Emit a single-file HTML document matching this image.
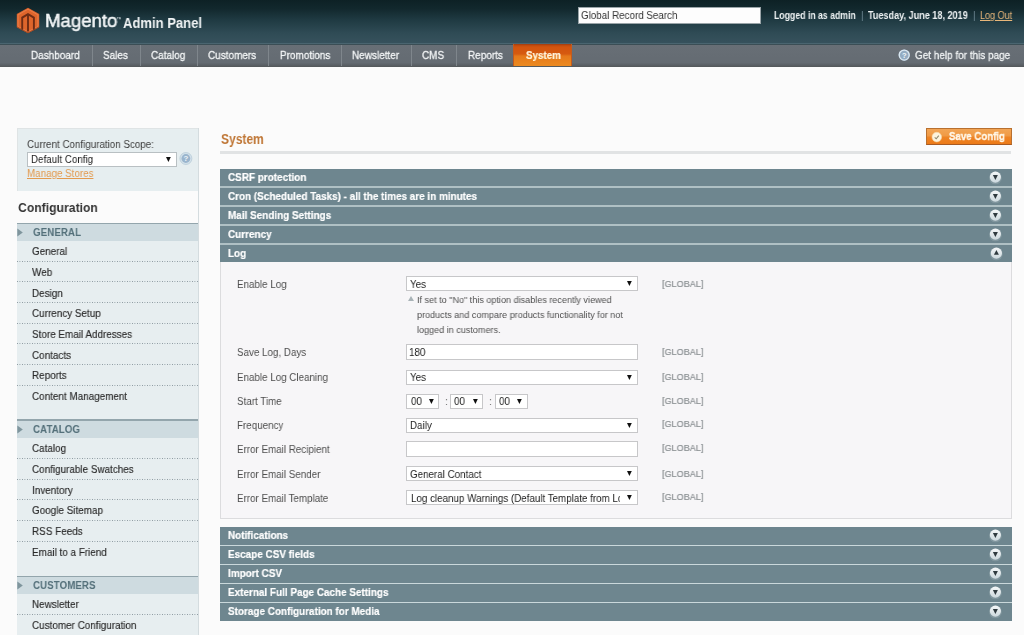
<!DOCTYPE html>
<html><head><meta charset="utf-8">
<style>
*{margin:0;padding:0;box-sizing:border-box}
html,body{width:1024px;height:635px;overflow:hidden;background:#fbfbfb;font-family:"Liberation Sans",sans-serif}
.r{position:absolute}
.t{position:absolute;white-space:nowrap;line-height:1;transform-origin:0 0;will-change:transform}
</style></head><body>
<div class="r" style="left:0px;top:0px;width:1024px;height:44px;background:linear-gradient(#0d2125 0%,#12282d 20%,#1f3a42 45%,#2f4b55 75%,#37525d 100%)"></div>
<div class="r" style="left:0px;top:42.5px;width:1024px;height:1px;background:#4a6570"></div>
<div class="r" style="left:0px;top:43.5px;width:1024px;height:1.5px;background:#3b4e55"></div>
<svg class="r" style="left:16px;top:7px" width="24" height="27" viewBox="16 7 24 27">
<polygon points="28,7.8 39.2,14 39.2,27.2 28,33.2 16.8,27.2 16.8,14" fill="#de652b"/>
<polygon points="28,9.2 37.9,14.8 37.9,26.5 28,31.8 18.1,26.5 18.1,14.8" fill="none" stroke="#ef8a5c" stroke-width="0.9" opacity="0.7"/>
<polyline points="22.2,30.2 22.2,17.6 28,14.2 33.9,17.6 33.9,30.2" fill="none" stroke="#6e2c14" stroke-width="1.9"/>
<line x1="28" y1="15" x2="28" y2="31.5" stroke="#6e2c14" stroke-width="1.9"/>
<polyline points="17.2,27 28,32.8 38.8,27" fill="none" stroke="#9a4420" stroke-width="0.9" opacity="0.8"/>
</svg>
<div class="t" style="left:45.20px;top:11.32px;font-size:19px;color:#f2f5f6;font-weight:normal;transform:scaleX(0.98);-webkit-text-stroke:0.5px #f2f5f6">Magento</div>
<div class="t" style="left:116.20px;top:16.32px;font-size:6px;color:#dfe6e8;font-weight:normal;transform:scaleX(0.9);">&#8482;</div>
<div class="t" style="left:123.30px;top:15.93px;font-size:14.5px;color:#f2f5f6;font-weight:bold;transform:scaleX(0.9);">Admin Panel</div>
<div class="r" style="left:578px;top:7px;width:183px;height:17px;background:#fdfdfd;border:1px solid #9aa4a8"></div>
<div class="t" style="left:580.70px;top:9.78px;font-size:11.25px;color:#333;font-weight:normal;transform:scaleX(0.871);">Global Record Search</div>
<div class="t" style="left:773.60px;top:11.34px;font-size:10px;color:#eef2f3;font-weight:bold;transform:scaleX(0.871);">Logged in as admin</div>
<div class="t" style="left:860.80px;top:11.34px;font-size:10px;color:#6d8690;font-weight:normal;transform:scaleX(0.871);">|</div>
<div class="t" style="left:868.10px;top:10.95px;font-size:10.45px;color:#eef2f3;font-weight:bold;transform:scaleX(0.871);">Tuesday, June 18, 2019</div>
<div class="t" style="left:972.80px;top:11.34px;font-size:10px;color:#6d8690;font-weight:normal;transform:scaleX(0.871);">|</div>
<div class="t" style="left:979.80px;top:11.00px;font-size:10.4px;color:#e9b77a;font-weight:normal;transform:scaleX(0.871);text-decoration:underline">Log Out</div>
<div class="r" style="left:0px;top:45px;width:1024px;height:21.5px;background:linear-gradient(#686f76 0%,#646b72 80%,#5d6369 88%,#53575a 100%)"></div>
<div class="r" style="left:91.5px;top:45px;width:1px;height:21px;background:#7f868c"></div>
<div class="r" style="left:139.5px;top:45px;width:1px;height:21px;background:#7f868c"></div>
<div class="r" style="left:196.5px;top:45px;width:1px;height:21px;background:#7f868c"></div>
<div class="r" style="left:267.5px;top:45px;width:1px;height:21px;background:#7f868c"></div>
<div class="r" style="left:340.5px;top:45px;width:1px;height:21px;background:#7f868c"></div>
<div class="r" style="left:410.5px;top:45px;width:1px;height:21px;background:#7f868c"></div>
<div class="r" style="left:455.5px;top:45px;width:1px;height:21px;background:#7f868c"></div>
<div class="t" style="left:31.40px;top:50.38px;font-size:11.25px;color:#f4f6f7;font-weight:normal;transform:scaleX(0.885);-webkit-text-stroke:0.3px #f4f6f7">Dashboard</div>
<div class="t" style="left:103.00px;top:50.38px;font-size:11.25px;color:#f4f6f7;font-weight:normal;transform:scaleX(0.885);-webkit-text-stroke:0.3px #f4f6f7">Sales</div>
<div class="t" style="left:150.90px;top:50.38px;font-size:11.25px;color:#f4f6f7;font-weight:normal;transform:scaleX(0.885);-webkit-text-stroke:0.3px #f4f6f7">Catalog</div>
<div class="t" style="left:208.00px;top:50.38px;font-size:11.25px;color:#f4f6f7;font-weight:normal;transform:scaleX(0.885);-webkit-text-stroke:0.3px #f4f6f7">Customers</div>
<div class="t" style="left:279.50px;top:50.38px;font-size:11.25px;color:#f4f6f7;font-weight:normal;transform:scaleX(0.885);-webkit-text-stroke:0.3px #f4f6f7">Promotions</div>
<div class="t" style="left:352.00px;top:50.38px;font-size:11.25px;color:#f4f6f7;font-weight:normal;transform:scaleX(0.885);-webkit-text-stroke:0.3px #f4f6f7">Newsletter</div>
<div class="t" style="left:422.00px;top:50.38px;font-size:11.25px;color:#f4f6f7;font-weight:normal;transform:scaleX(0.885);-webkit-text-stroke:0.3px #f4f6f7">CMS</div>
<div class="t" style="left:467.50px;top:50.38px;font-size:11.25px;color:#f4f6f7;font-weight:normal;transform:scaleX(0.885);-webkit-text-stroke:0.3px #f4f6f7">Reports</div>
<div class="r" style="left:513px;top:44px;width:59px;height:22px;background:linear-gradient(#9c3c10 0,#c04b0e 1.5px,#d2540e 3px,#d65a10 45%,#e5791a 55%,#ec8a20 100%);border-left:1px solid #c45a1c;border-right:1px solid #c45a1c"></div>
<div class="t" style="left:525.60px;top:50.38px;font-size:11.25px;color:#fff5de;font-weight:bold;transform:scaleX(0.871);-webkit-text-stroke:0.2px #fff5de">System</div>
<svg class="r" style="left:897px;top:47.5px" width="14" height="14" viewBox="0 0 14 14">
<circle cx="7.2" cy="7.1" r="5.6" fill="#93acc2"/>
<circle cx="7.2" cy="7.1" r="5" fill="none" stroke="#dbe8f1" stroke-width="1.3"/>
<text x="7.2" y="9.8" font-family="Liberation Sans" font-weight="bold" font-size="7.5" text-anchor="middle" fill="#f2f7fa">?</text>
</svg>
<div class="t" style="left:914.80px;top:50.18px;font-size:11.25px;color:#f0f3f4;font-weight:normal;transform:scaleX(0.885);-webkit-text-stroke:0.3px #f0f3f4">Get help for this page</div>
<div class="r" style="left:17px;top:128px;width:182px;height:63px;background:#e6eef0;border:1px solid #dfe4e5;border-bottom:none"></div>
<div class="t" style="left:27.00px;top:138.78px;font-size:11.25px;color:#3c3c3c;font-weight:normal;transform:scaleX(0.871);">Current Configuration Scope:</div>
<div class="r" style="left:26.5px;top:152px;width:150px;height:15px;background:#fff;border:1px solid #b9c0c3"></div>
<div class="t" style="left:30.80px;top:153.88px;font-size:11.25px;color:#222;font-weight:normal;transform:scaleX(0.871);">Default Config</div>
<svg class="r" style="left:165px;top:156.2px" width="6.8" height="6.9" viewBox="165 156.2 6.8 6.9"><polygon points="166,157.2 170.8,157.2 168.4,162.1" fill="#111"/></svg>
<svg class="r" style="left:179px;top:152px" width="14" height="14" viewBox="0 0 14 14">
<circle cx="6.9" cy="6.5" r="6" fill="#d3e1ea" stroke="#b3c8d6" stroke-width="0.7"/>
<circle cx="6.9" cy="6.5" r="4.4" fill="#9ab5cd"/>
<text x="6.9" y="9.3" font-family="Liberation Sans" font-weight="bold" font-size="7.8" text-anchor="middle" fill="#eef4f8">?</text>
</svg>
<div class="t" style="left:27.00px;top:168.18px;font-size:11.25px;color:#e39a4e;font-weight:normal;transform:scaleX(0.871);text-decoration:underline">Manage Stores</div>
<div class="r" style="left:198px;top:128px;width:1px;height:507px;background:#d4dcdf"></div>
<div class="t" style="left:18.00px;top:201.40px;font-size:13.7px;color:#333;font-weight:bold;transform:scaleX(0.89);">Configuration</div>
<div class="r" style="left:17px;top:222.8px;width:181px;height:196.2px;background:#e7eef0"></div>
<div class="r" style="left:17px;top:222.8px;width:181px;height:1.5px;background:#93a5ac"></div>
<div class="r" style="left:17px;top:224.3px;width:181px;height:17.2px;background:#cedbe0"></div>
<svg class="r" style="left:17px;top:228.3px" width="7" height="9" viewBox="0 0 7 9"><polygon points="0.3,0.5 5.8,4.5 0.3,8.5" fill="#7f959d"/></svg>
<div class="t" style="left:32.50px;top:227.48px;font-size:11.25px;color:#54707a;font-weight:bold;transform:scaleX(0.871);">GENERAL</div>
<div class="t" style="left:32.20px;top:246.48px;font-size:11.25px;color:#2a2a2a;font-weight:normal;transform:scaleX(0.879);-webkit-text-stroke:0.15px #2a2a2a">General</div>
<div class="t" style="left:32.20px;top:267.12px;font-size:11.25px;color:#2a2a2a;font-weight:normal;transform:scaleX(0.879);-webkit-text-stroke:0.15px #2a2a2a">Web</div>
<div class="t" style="left:32.20px;top:287.76px;font-size:11.25px;color:#2a2a2a;font-weight:normal;transform:scaleX(0.879);-webkit-text-stroke:0.15px #2a2a2a">Design</div>
<div class="t" style="left:32.20px;top:308.40px;font-size:11.25px;color:#2a2a2a;font-weight:normal;transform:scaleX(0.879);-webkit-text-stroke:0.15px #2a2a2a">Currency Setup</div>
<div class="t" style="left:32.20px;top:329.04px;font-size:11.25px;color:#2a2a2a;font-weight:normal;transform:scaleX(0.879);-webkit-text-stroke:0.15px #2a2a2a">Store Email Addresses</div>
<div class="t" style="left:32.20px;top:349.68px;font-size:11.25px;color:#2a2a2a;font-weight:normal;transform:scaleX(0.879);-webkit-text-stroke:0.15px #2a2a2a">Contacts</div>
<div class="t" style="left:32.20px;top:370.32px;font-size:11.25px;color:#2a2a2a;font-weight:normal;transform:scaleX(0.879);-webkit-text-stroke:0.15px #2a2a2a">Reports</div>
<div class="t" style="left:32.20px;top:390.96px;font-size:11.25px;color:#2a2a2a;font-weight:normal;transform:scaleX(0.879);-webkit-text-stroke:0.15px #2a2a2a">Content Management</div>
<div class="r" style="left:17px;top:261px;width:181px;height:1px;background-image:linear-gradient(to right,#86939a 40%,transparent 40%);background-size:2.5px 1px"></div>
<div class="r" style="left:17px;top:281px;width:181px;height:1px;background-image:linear-gradient(to right,#86939a 40%,transparent 40%);background-size:2.5px 1px"></div>
<div class="r" style="left:17px;top:302px;width:181px;height:1px;background-image:linear-gradient(to right,#86939a 40%,transparent 40%);background-size:2.5px 1px"></div>
<div class="r" style="left:17px;top:323px;width:181px;height:1px;background-image:linear-gradient(to right,#86939a 40%,transparent 40%);background-size:2.5px 1px"></div>
<div class="r" style="left:17px;top:343px;width:181px;height:1px;background-image:linear-gradient(to right,#86939a 40%,transparent 40%);background-size:2.5px 1px"></div>
<div class="r" style="left:17px;top:364px;width:181px;height:1px;background-image:linear-gradient(to right,#86939a 40%,transparent 40%);background-size:2.5px 1px"></div>
<div class="r" style="left:17px;top:385px;width:181px;height:1px;background-image:linear-gradient(to right,#86939a 40%,transparent 40%);background-size:2.5px 1px"></div>
<div class="r" style="left:17px;top:419px;width:181px;height:156.5px;background:#e7eef0"></div>
<div class="r" style="left:17px;top:419px;width:181px;height:1.5px;background:#93a5ac"></div>
<div class="r" style="left:17px;top:420.5px;width:181px;height:17.2px;background:#cedbe0"></div>
<svg class="r" style="left:17px;top:424.5px" width="7" height="9" viewBox="0 0 7 9"><polygon points="0.3,0.5 5.8,4.5 0.3,8.5" fill="#7f959d"/></svg>
<div class="t" style="left:32.50px;top:424.38px;font-size:11.25px;color:#54707a;font-weight:bold;transform:scaleX(0.871);">CATALOG</div>
<div class="t" style="left:32.20px;top:443.38px;font-size:11.25px;color:#2a2a2a;font-weight:normal;transform:scaleX(0.879);-webkit-text-stroke:0.15px #2a2a2a">Catalog</div>
<div class="t" style="left:32.20px;top:464.02px;font-size:11.25px;color:#2a2a2a;font-weight:normal;transform:scaleX(0.879);-webkit-text-stroke:0.15px #2a2a2a">Configurable Swatches</div>
<div class="t" style="left:32.20px;top:484.66px;font-size:11.25px;color:#2a2a2a;font-weight:normal;transform:scaleX(0.879);-webkit-text-stroke:0.15px #2a2a2a">Inventory</div>
<div class="t" style="left:32.20px;top:505.30px;font-size:11.25px;color:#2a2a2a;font-weight:normal;transform:scaleX(0.879);-webkit-text-stroke:0.15px #2a2a2a">Google Sitemap</div>
<div class="t" style="left:32.20px;top:525.94px;font-size:11.25px;color:#2a2a2a;font-weight:normal;transform:scaleX(0.879);-webkit-text-stroke:0.15px #2a2a2a">RSS Feeds</div>
<div class="t" style="left:32.20px;top:546.58px;font-size:11.25px;color:#2a2a2a;font-weight:normal;transform:scaleX(0.879);-webkit-text-stroke:0.15px #2a2a2a">Email to a Friend</div>
<div class="r" style="left:17px;top:458px;width:181px;height:1px;background-image:linear-gradient(to right,#86939a 40%,transparent 40%);background-size:2.5px 1px"></div>
<div class="r" style="left:17px;top:479px;width:181px;height:1px;background-image:linear-gradient(to right,#86939a 40%,transparent 40%);background-size:2.5px 1px"></div>
<div class="r" style="left:17px;top:499px;width:181px;height:1px;background-image:linear-gradient(to right,#86939a 40%,transparent 40%);background-size:2.5px 1px"></div>
<div class="r" style="left:17px;top:520px;width:181px;height:1px;background-image:linear-gradient(to right,#86939a 40%,transparent 40%);background-size:2.5px 1px"></div>
<div class="r" style="left:17px;top:541px;width:181px;height:1px;background-image:linear-gradient(to right,#86939a 40%,transparent 40%);background-size:2.5px 1px"></div>
<div class="r" style="left:17px;top:575.5px;width:181px;height:64.5px;background:#e7eef0"></div>
<div class="r" style="left:17px;top:575.5px;width:181px;height:1.5px;background:#93a5ac"></div>
<div class="r" style="left:17px;top:577.0px;width:181px;height:17.2px;background:#cedbe0"></div>
<svg class="r" style="left:17px;top:581.0px" width="7" height="9" viewBox="0 0 7 9"><polygon points="0.3,0.5 5.8,4.5 0.3,8.5" fill="#7f959d"/></svg>
<div class="t" style="left:32.50px;top:579.68px;font-size:11.25px;color:#54707a;font-weight:bold;transform:scaleX(0.871);">CUSTOMERS</div>
<div class="t" style="left:32.20px;top:599.48px;font-size:11.25px;color:#2a2a2a;font-weight:normal;transform:scaleX(0.879);-webkit-text-stroke:0.15px #2a2a2a">Newsletter</div>
<div class="t" style="left:32.20px;top:620.12px;font-size:11.25px;color:#2a2a2a;font-weight:normal;transform:scaleX(0.879);-webkit-text-stroke:0.15px #2a2a2a">Customer Configuration</div>
<div class="r" style="left:17px;top:614px;width:181px;height:1px;background-image:linear-gradient(to right,#86939a 40%,transparent 40%);background-size:2.5px 1px"></div>
<div class="r" style="left:198px;top:128px;width:1px;height:507px;background:#d4dcdf"></div>
<div class="t" style="left:220.50px;top:133.42px;font-size:13.8px;color:#bf7635;font-weight:bold;transform:scaleX(0.871);">System</div>
<div class="r" style="left:220px;top:150.5px;width:791px;height:3px;background:#e1e3e4"></div>
<div class="r" style="left:926px;top:128px;width:86px;height:17.3px;background:linear-gradient(#f2a555 0%,#f09a45 45%,#ee8425 55%,#ec7a18 100%);border:1px solid #b8702f;border-bottom-color:#a85a22"></div>
<svg class="r" style="left:930.5px;top:130.5px" width="12" height="12" viewBox="0 0 12 12">
<circle cx="5.8" cy="6.1" r="4.8" fill="#fdf3dc" stroke="#f6d9a8" stroke-width="0.6"/>
<polyline points="3.7,6.4 5.2,7.8 7.8,4.6" fill="none" stroke="#8e8a70" stroke-width="1.1"/>
</svg>
<div class="t" style="left:949.00px;top:131.19px;font-size:11px;color:#fff8ea;font-weight:bold;transform:scaleX(0.88);-webkit-text-stroke:0.35px #fff8ea">Save Config</div>
<svg width="0" height="0" style="position:absolute"><defs><linearGradient id="cg" x1="0" y1="0" x2="0" y2="1"><stop offset="0" stop-color="#f4f7f8"/><stop offset="1" stop-color="#cdd9de"/></linearGradient></defs></svg>
<div class="r" style="left:220px;top:168.5px;width:791.7px;height:94.5px;background:#afc0c4"></div>
<div class="r" style="left:220px;top:168.5px;width:791.7px;height:17.3px;background:#6e868f"></div>
<div class="t" style="left:228.10px;top:171.78px;font-size:11.25px;color:#ffffff;font-weight:bold;transform:scaleX(0.882);-webkit-text-stroke:0.2px #fff">CSRF protection</div>
<svg class="r" style="left:987px;top:168.5px" width="18" height="18" viewBox="987 168.5 18 18">
<circle cx="995.4" cy="177.4" r="6.4" fill="#8da1a9" opacity="0.6"/>
<circle cx="995.4" cy="176.6" r="5.6" fill="url(#cg)"/>
<polygon points="992.9,174.6 997.9,174.6 995.4,179.4" fill="#2f3a3f"/>
</svg>
<div class="r" style="left:220px;top:187.6px;width:791.7px;height:17.3px;background:#6e868f"></div>
<div class="t" style="left:228.10px;top:190.88px;font-size:11.25px;color:#ffffff;font-weight:bold;transform:scaleX(0.882);-webkit-text-stroke:0.2px #fff">Cron (Scheduled Tasks) - all the times are in minutes</div>
<svg class="r" style="left:987px;top:187.6px" width="18" height="18" viewBox="987 168.5 18 18">
<circle cx="995.4" cy="177.4" r="6.4" fill="#8da1a9" opacity="0.6"/>
<circle cx="995.4" cy="176.6" r="5.6" fill="url(#cg)"/>
<polygon points="992.9,174.6 997.9,174.6 995.4,179.4" fill="#2f3a3f"/>
</svg>
<div class="r" style="left:220px;top:206.7px;width:791.7px;height:17.3px;background:#6e868f"></div>
<div class="t" style="left:228.10px;top:209.98px;font-size:11.25px;color:#ffffff;font-weight:bold;transform:scaleX(0.882);-webkit-text-stroke:0.2px #fff">Mail Sending Settings</div>
<svg class="r" style="left:987px;top:206.7px" width="18" height="18" viewBox="987 168.5 18 18">
<circle cx="995.4" cy="177.4" r="6.4" fill="#8da1a9" opacity="0.6"/>
<circle cx="995.4" cy="176.6" r="5.6" fill="url(#cg)"/>
<polygon points="992.9,174.6 997.9,174.6 995.4,179.4" fill="#2f3a3f"/>
</svg>
<div class="r" style="left:220px;top:225.8px;width:791.7px;height:17.3px;background:#6e868f"></div>
<div class="t" style="left:228.10px;top:229.08px;font-size:11.25px;color:#ffffff;font-weight:bold;transform:scaleX(0.882);-webkit-text-stroke:0.2px #fff">Currency</div>
<svg class="r" style="left:987px;top:225.8px" width="18" height="18" viewBox="987 168.5 18 18">
<circle cx="995.4" cy="177.4" r="6.4" fill="#8da1a9" opacity="0.6"/>
<circle cx="995.4" cy="176.6" r="5.6" fill="url(#cg)"/>
<polygon points="992.9,174.6 997.9,174.6 995.4,179.4" fill="#2f3a3f"/>
</svg>
<div class="r" style="left:220px;top:244.9px;width:791.7px;height:17.3px;background:#6e868f"></div>
<div class="t" style="left:228.10px;top:248.18px;font-size:11.25px;color:#ffffff;font-weight:bold;transform:scaleX(0.882);-webkit-text-stroke:0.2px #fff">Log</div>
<svg class="r" style="left:987.7px;top:244.9px" width="18" height="18" viewBox="987 168.5 18 18">
<circle cx="995.4" cy="177.4" r="6.4" fill="#8da1a9" opacity="0.6"/>
<circle cx="995.4" cy="176.6" r="5.6" fill="url(#cg)"/>
<polygon points="992.9,178.2 997.9,178.2 995.4,173.6" fill="#2f3a3f"/>
</svg>
<div class="r" style="left:220px;top:262.3px;width:792px;height:257px;background:#f7f6f8;border:1px solid #dcdcde;border-top:none"></div>
<div class="t" style="left:237.20px;top:279.18px;font-size:11.25px;color:#4d4d4d;font-weight:normal;transform:scaleX(0.871);">Enable Log</div>
<div class="t" style="left:661.90px;top:278.60px;font-size:9.8px;color:#8a8f92;font-weight:normal;transform:scaleX(0.925);-webkit-text-stroke:0.2px #8a8f92">[GLOBAL]</div>
<div class="r" style="left:406px;top:276.3px;width:231.5px;height:15px;background:#fff;border:1px solid #c7c7c9"></div>
<div class="t" style="left:409.90px;top:279.18px;font-size:11.25px;color:#222;font-weight:normal;transform:scaleX(0.871);">Yes</div>
<div class="r" style="left:620px;top:277.3px;width:16px;height:13px;background:#fff"></div>
<svg class="r" style="left:626px;top:280.3px" width="6.8" height="6.9" viewBox="626 280.3 6.8 6.9"><polygon points="627,281.3 631.8,281.3 629.4,286.2" fill="#111"/></svg>
<div class="t" style="left:237.20px;top:346.68px;font-size:11.25px;color:#4d4d4d;font-weight:normal;transform:scaleX(0.871);">Save Log, Days</div>
<div class="t" style="left:661.90px;top:346.80px;font-size:9.8px;color:#8a8f92;font-weight:normal;transform:scaleX(0.925);-webkit-text-stroke:0.2px #8a8f92">[GLOBAL]</div>
<div class="r" style="left:406px;top:344.3px;width:231.5px;height:16px;background:#fff;border:1px solid #c7c7c9"></div>
<div class="t" style="left:409.30px;top:346.68px;font-size:11.25px;color:#222;font-weight:normal;transform:scaleX(0.871);">180</div>
<div class="t" style="left:237.20px;top:372.28px;font-size:11.25px;color:#4d4d4d;font-weight:normal;transform:scaleX(0.871);">Enable Log Cleaning</div>
<div class="t" style="left:661.90px;top:371.70px;font-size:9.8px;color:#8a8f92;font-weight:normal;transform:scaleX(0.925);-webkit-text-stroke:0.2px #8a8f92">[GLOBAL]</div>
<div class="r" style="left:406px;top:370.3px;width:231.5px;height:15px;background:#fff;border:1px solid #c7c7c9"></div>
<div class="t" style="left:409.90px;top:372.28px;font-size:11.25px;color:#222;font-weight:normal;transform:scaleX(0.871);">Yes</div>
<div class="r" style="left:620px;top:371.3px;width:16px;height:13px;background:#fff"></div>
<svg class="r" style="left:626px;top:374.3px" width="6.8" height="6.9" viewBox="626 374.3 6.8 6.9"><polygon points="627,375.3 631.8,375.3 629.4,380.2" fill="#111"/></svg>
<div class="t" style="left:237.20px;top:396.48px;font-size:11.25px;color:#4d4d4d;font-weight:normal;transform:scaleX(0.871);">Start Time</div>
<div class="t" style="left:661.90px;top:395.90px;font-size:9.8px;color:#8a8f92;font-weight:normal;transform:scaleX(0.925);-webkit-text-stroke:0.2px #8a8f92">[GLOBAL]</div>
<div class="r" style="left:406.3px;top:394.4px;width:32.7px;height:14.5px;background:#fff;border:1px solid #c7c7c9"></div>
<div class="t" style="left:410.60px;top:396.48px;font-size:11.25px;color:#222;font-weight:normal;transform:scaleX(0.871);">00</div>
<svg class="r" style="left:427.90000000000003px;top:397.79999999999995px" width="6.8" height="6.9" viewBox="427.90000000000003 397.79999999999995 6.8 6.9"><polygon points="428.90000000000003,398.79999999999995 433.70000000000005,398.79999999999995 431.3,403.69999999999993" fill="#111"/></svg>
<div class="r" style="left:450px;top:394.4px;width:32.8px;height:14.5px;background:#fff;border:1px solid #c7c7c9"></div>
<div class="t" style="left:454.30px;top:396.48px;font-size:11.25px;color:#222;font-weight:normal;transform:scaleX(0.871);">00</div>
<svg class="r" style="left:471.6px;top:397.79999999999995px" width="6.8" height="6.9" viewBox="471.6 397.79999999999995 6.8 6.9"><polygon points="472.6,398.79999999999995 477.40000000000003,398.79999999999995 475.0,403.69999999999993" fill="#111"/></svg>
<div class="r" style="left:494.5px;top:394.4px;width:33.3px;height:14.5px;background:#fff;border:1px solid #c7c7c9"></div>
<div class="t" style="left:498.80px;top:396.48px;font-size:11.25px;color:#222;font-weight:normal;transform:scaleX(0.871);">00</div>
<svg class="r" style="left:516.1px;top:397.79999999999995px" width="6.8" height="6.9" viewBox="516.1 397.79999999999995 6.8 6.9"><polygon points="517.1,398.79999999999995 521.9,398.79999999999995 519.5,403.69999999999993" fill="#111"/></svg>
<div class="t" style="left:445.00px;top:396.48px;font-size:11.25px;color:#666;font-weight:normal;transform:scaleX(0.871);">:</div>
<div class="t" style="left:489.00px;top:396.48px;font-size:11.25px;color:#666;font-weight:normal;transform:scaleX(0.871);">:</div>
<div class="t" style="left:237.20px;top:419.58px;font-size:11.25px;color:#4d4d4d;font-weight:normal;transform:scaleX(0.871);">Frequency</div>
<div class="t" style="left:661.90px;top:419.00px;font-size:9.8px;color:#8a8f92;font-weight:normal;transform:scaleX(0.925);-webkit-text-stroke:0.2px #8a8f92">[GLOBAL]</div>
<div class="r" style="left:406px;top:418.1px;width:231.5px;height:15px;background:#fff;border:1px solid #c7c7c9"></div>
<div class="t" style="left:409.90px;top:419.58px;font-size:11.25px;color:#222;font-weight:normal;transform:scaleX(0.871);">Daily</div>
<div class="r" style="left:620px;top:419.1px;width:16px;height:13px;background:#fff"></div>
<svg class="r" style="left:626px;top:422.1px" width="6.8" height="6.9" viewBox="626 422.1 6.8 6.9"><polygon points="627,423.1 631.8,423.1 629.4,428.0" fill="#111"/></svg>
<div class="t" style="left:237.20px;top:443.58px;font-size:11.25px;color:#4d4d4d;font-weight:normal;transform:scaleX(0.871);">Error Email Recipient</div>
<div class="t" style="left:661.90px;top:443.00px;font-size:9.8px;color:#8a8f92;font-weight:normal;transform:scaleX(0.925);-webkit-text-stroke:0.2px #8a8f92">[GLOBAL]</div>
<div class="r" style="left:406px;top:441.3px;width:231.5px;height:16px;background:#fff;border:1px solid #c7c7c9"></div>
<div class="t" style="left:237.20px;top:469.18px;font-size:11.25px;color:#4d4d4d;font-weight:normal;transform:scaleX(0.871);">Error Email Sender</div>
<div class="t" style="left:661.90px;top:468.60px;font-size:9.8px;color:#8a8f92;font-weight:normal;transform:scaleX(0.925);-webkit-text-stroke:0.2px #8a8f92">[GLOBAL]</div>
<div class="r" style="left:406px;top:466.1px;width:231.5px;height:15px;background:#fff;border:1px solid #c7c7c9"></div>
<div class="t" style="left:409.90px;top:469.18px;font-size:11.25px;color:#222;font-weight:normal;transform:scaleX(0.871);">General Contact</div>
<div class="r" style="left:620px;top:467.1px;width:16px;height:13px;background:#fff"></div>
<svg class="r" style="left:626px;top:470.1px" width="6.8" height="6.9" viewBox="626 470.1 6.8 6.9"><polygon points="627,471.1 631.8,471.1 629.4,476.0" fill="#111"/></svg>
<div class="t" style="left:237.20px;top:492.98px;font-size:11.25px;color:#4d4d4d;font-weight:normal;transform:scaleX(0.871);">Error Email Template</div>
<div class="t" style="left:661.90px;top:492.40px;font-size:9.8px;color:#8a8f92;font-weight:normal;transform:scaleX(0.925);-webkit-text-stroke:0.2px #8a8f92">[GLOBAL]</div>
<div class="r" style="left:406px;top:489.9px;width:231.5px;height:15px;background:#fff;border:1px solid #c7c7c9"></div>
<div class="r" style="left:407px;top:490.9px;width:213px;height:13px;overflow:hidden"><div class="t" style="left:3.9px;top:2.08px;font-size:11.25px;color:#222;transform:scaleX(0.871)">Log cleanup Warnings (Default Template from Lo</div></div>
<div class="r" style="left:620px;top:490.9px;width:16px;height:13px;background:#fff"></div>
<svg class="r" style="left:626px;top:493.9px" width="6.8" height="6.9" viewBox="626 493.9 6.8 6.9"><polygon points="627,494.9 631.8,494.9 629.4,499.79999999999995" fill="#111"/></svg>
<svg class="r" style="left:407.5px;top:295.5px" width="6" height="5" viewBox="0 0 6 5"><polygon points="0,5 6,5 3,0" fill="#a9b3b7"/></svg>
<div class="t" style="left:417.20px;top:295.44px;font-size:9.4px;color:#4f4f4f;font-weight:normal;transform:scaleX(0.966);">If set to "No" this option disables recently viewed</div>
<div class="t" style="left:417.20px;top:310.14px;font-size:9.4px;color:#4f4f4f;font-weight:normal;transform:scaleX(0.966);">products and compare products functionality for not</div>
<div class="t" style="left:417.20px;top:324.64px;font-size:9.4px;color:#4f4f4f;font-weight:normal;transform:scaleX(0.966);">logged in customers.</div>
<div class="r" style="left:220px;top:527.1px;width:791.7px;height:93.5px;background:#cad8db"></div>
<div class="r" style="left:220px;top:527.1px;width:791.7px;height:17.8px;background:#6e868f"></div>
<div class="t" style="left:228.10px;top:530.38px;font-size:11.25px;color:#ffffff;font-weight:bold;transform:scaleX(0.882);-webkit-text-stroke:0.2px #fff">Notifications</div>
<svg class="r" style="left:987px;top:527.1px" width="18" height="18" viewBox="987 168.5 18 18">
<circle cx="995.4" cy="177.4" r="6.4" fill="#8da1a9" opacity="0.6"/>
<circle cx="995.4" cy="176.6" r="5.6" fill="url(#cg)"/>
<polygon points="992.9,174.6 997.9,174.6 995.4,179.4" fill="#2f3a3f"/>
</svg>
<div class="r" style="left:220px;top:546.1px;width:791.7px;height:17.8px;background:#6e868f"></div>
<div class="t" style="left:228.10px;top:549.38px;font-size:11.25px;color:#ffffff;font-weight:bold;transform:scaleX(0.882);-webkit-text-stroke:0.2px #fff">Escape CSV fields</div>
<svg class="r" style="left:987px;top:546.1px" width="18" height="18" viewBox="987 168.5 18 18">
<circle cx="995.4" cy="177.4" r="6.4" fill="#8da1a9" opacity="0.6"/>
<circle cx="995.4" cy="176.6" r="5.6" fill="url(#cg)"/>
<polygon points="992.9,174.6 997.9,174.6 995.4,179.4" fill="#2f3a3f"/>
</svg>
<div class="r" style="left:220px;top:565.1px;width:791.7px;height:17.8px;background:#6e868f"></div>
<div class="t" style="left:228.10px;top:568.38px;font-size:11.25px;color:#ffffff;font-weight:bold;transform:scaleX(0.882);-webkit-text-stroke:0.2px #fff">Import CSV</div>
<svg class="r" style="left:987px;top:565.1px" width="18" height="18" viewBox="987 168.5 18 18">
<circle cx="995.4" cy="177.4" r="6.4" fill="#8da1a9" opacity="0.6"/>
<circle cx="995.4" cy="176.6" r="5.6" fill="url(#cg)"/>
<polygon points="992.9,174.6 997.9,174.6 995.4,179.4" fill="#2f3a3f"/>
</svg>
<div class="r" style="left:220px;top:584.2px;width:791.7px;height:17.8px;background:#6e868f"></div>
<div class="t" style="left:228.10px;top:587.48px;font-size:11.25px;color:#ffffff;font-weight:bold;transform:scaleX(0.882);-webkit-text-stroke:0.2px #fff">External Full Page Cache Settings</div>
<svg class="r" style="left:987px;top:584.2px" width="18" height="18" viewBox="987 168.5 18 18">
<circle cx="995.4" cy="177.4" r="6.4" fill="#8da1a9" opacity="0.6"/>
<circle cx="995.4" cy="176.6" r="5.6" fill="url(#cg)"/>
<polygon points="992.9,174.6 997.9,174.6 995.4,179.4" fill="#2f3a3f"/>
</svg>
<div class="r" style="left:220px;top:603.2px;width:791.7px;height:17.8px;background:#6e868f"></div>
<div class="t" style="left:228.10px;top:606.48px;font-size:11.25px;color:#ffffff;font-weight:bold;transform:scaleX(0.882);-webkit-text-stroke:0.2px #fff">Storage Configuration for Media</div>
<svg class="r" style="left:987px;top:603.2px" width="18" height="18" viewBox="987 168.5 18 18">
<circle cx="995.4" cy="177.4" r="6.4" fill="#8da1a9" opacity="0.6"/>
<circle cx="995.4" cy="176.6" r="5.6" fill="url(#cg)"/>
<polygon points="992.9,174.6 997.9,174.6 995.4,179.4" fill="#2f3a3f"/>
</svg>
</body></html>
